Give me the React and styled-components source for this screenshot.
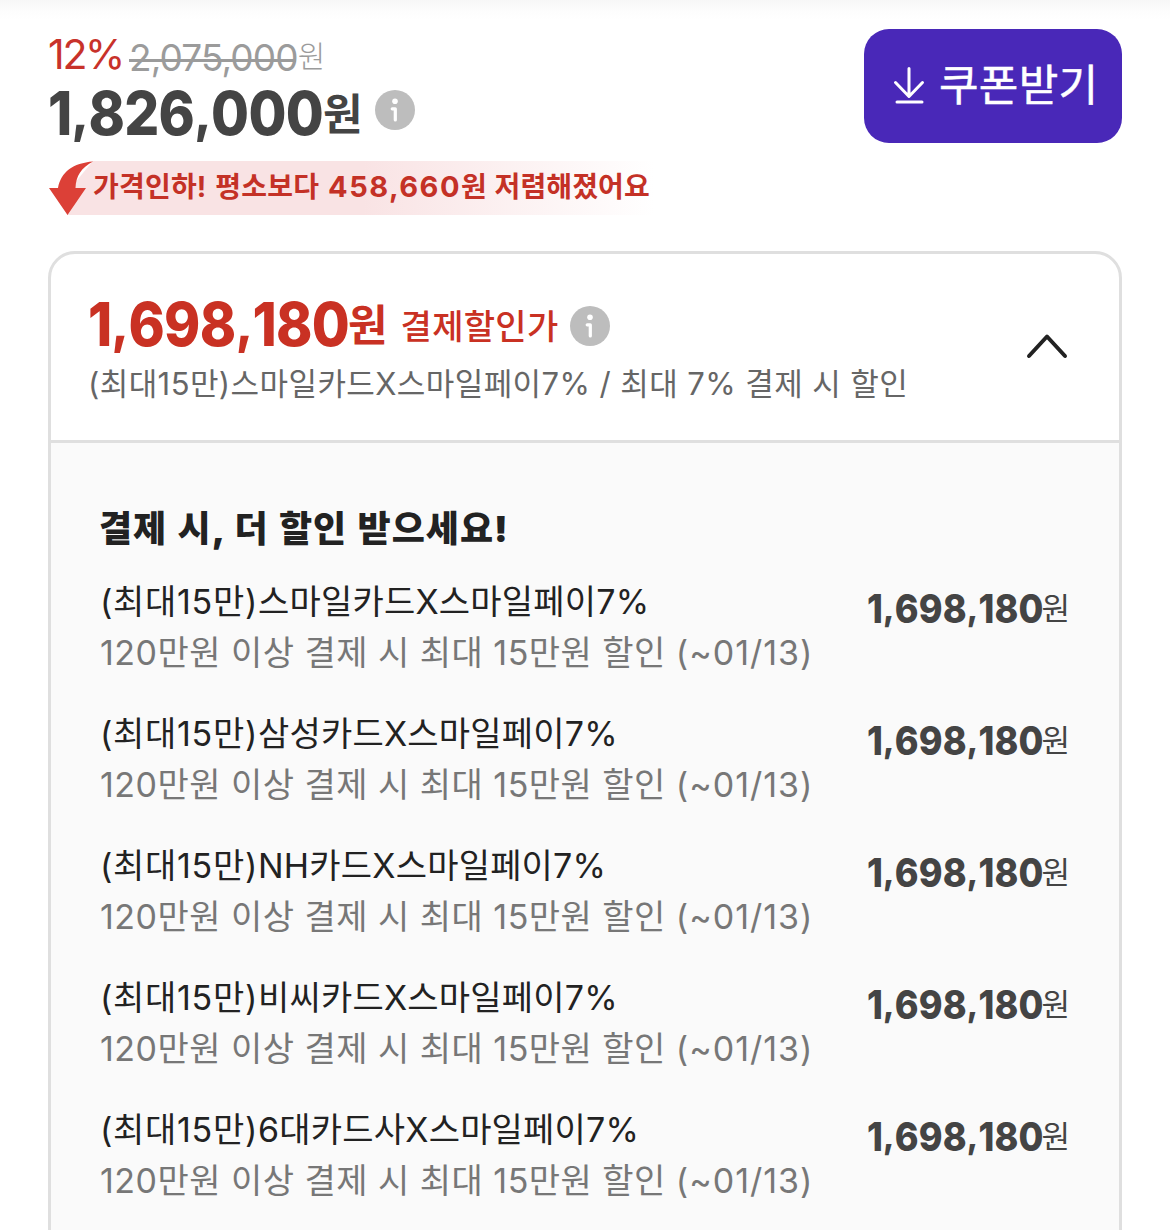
import React from "react";
import styled, { createGlobalStyle } from "styled-components";

const GlobalStyle = createGlobalStyle`
  * { box-sizing: border-box; }
  body {
    margin: 0;
    background: #fff;
    font-family: Inter, "Noto Sans CJK KR", sans-serif;
    overflow: hidden;
  }
`;

const Page = styled.main`
  width: 1170px;
  height: 1230px;
  overflow: hidden;
  padding: 29px 48px 0;
  background: linear-gradient(#f7f7f7, #fdfdfd 12px, #fff 20px) no-repeat;
`;

const Text = styled.span`
  font-size: ${(p) => p.$size}px;
  font-weight: ${(p) => p.$weight || 400};
  letter-spacing: ${(p) => p.$track || 0}px;
  word-spacing: ${(p) => p.$word || 0}px;
  color: ${(p) => p.$color || "inherit"};
  white-space: pre;
`;

const FigureBox = styled.span`
  display: inline-block;
  flex: none;
  width: ${(p) => p.$width}px;
`;

const Figure = styled(Text)`
  display: inline-block;
  transform: scaleX(0.9);
  transform-origin: 0 50%;
`;

const Comma = styled.span`
  font-size: 0.9em;
  line-height: 0;
  vertical-align: 0.08em;
`;

const TopRow = styled.header`
  display: flex;
  justify-content: space-between;
  align-items: flex-start;
  height: 132px;
`;

const PriceColumn = styled.div`
  display: flex;
  flex-direction: column;
`;

const BeforeLine = styled.div`
  display: flex;
  height: 49px;
  line-height: 50px;
`;

const Struck = styled.span`
  display: inline-flex;
  height: 50px;
  margin: 4px 0 0 6px;
  background: linear-gradient(#9b9b9b, #9b9b9b) 0 26px / 167px 3px no-repeat;
`;

const PriceLine = styled.div`
  display: flex;
  align-items: baseline;
  line-height: ${(p) => p.$height}px;
  height: ${(p) => p.$height}px;
`;

const Won = styled(Text)`
  margin: 0 0 ${(p) => p.$lift || 0}px ${(p) => p.$gap || 0}px;
  line-height: 1;
  align-self: flex-end;
`;

const InfoSvg = styled.svg`
  display: block;
  flex: none;
  align-self: flex-start;
  margin: ${(p) => p.$top}px 0 0 ${(p) => p.$left}px;
`;

const CouponButton = styled.button`
  display: flex;
  align-items: center;
  width: 258px;
  height: 114px;
  padding: 0 0 0 29px;
  border: 0;
  border-radius: 25px;
  background: #4928b8;
  color: #fff;
  font-family: inherit;
  line-height: 60px;
`;

const CouponLabel = styled(Text)`
  margin: -2px 0 0 14px;
  -webkit-text-stroke: 0.5px #fff;
`;

const DropBanner = styled.div`
  display: flex;
  align-items: center;
  width: 606px;
  height: 54px;
  padding-left: 1px;
  color: #c43126;
  background: linear-gradient(90deg, #fff 44px, #f9e3e4 44px, #f9e3e4 52%, #fff 100%);
`;

const ArrowSvg = styled.svg`
  display: block;
  flex: none;
`;

const BannerBody = styled.div`
  display: flex;
  align-items: baseline;
  height: 54px;
  line-height: 52px;
`;

const Card = styled.section`
  height: 1010px;
  margin-top: 36px;
  border: 3px solid #dfdfdf;
  border-radius: 27px;
  overflow: hidden;
`;

const CardHead = styled.div`
  display: flex;
  justify-content: space-between;
  height: 189px;
  padding: 32px 51px 0 37px;
  border-bottom: 3px solid #dfdfdf;
`;

const Sub = styled.div`
  line-height: 44px;
`;

const Chevron = styled.svg`
  margin-top: 33px;
  flex: none;
`;

const CardBody = styled.div`
  height: 818px;
  padding: 60px 49px 0 49px;
  background: #fafafa;
`;

const Title = styled.h2`
  margin: 0 0 21px -1px;
  height: 52px;
  line-height: 52px;
  color: #222;
`;

const List = styled.ul`
  display: grid;
  gap: 30px;
  margin: 0;
  padding: 0;
  list-style: none;
`;

const Row = styled.li`
  display: flex;
  justify-content: space-between;
  height: 102px;
  line-height: 51px;
`;

const Detail = styled.div`
  display: flex;
  flex-direction: column;
`;

const DetailLine = styled.div`
  display: flex;
  height: 51px;
`;

const RowPrice = styled.div`
  display: flex;
  align-items: baseline;
  height: 58px;
  padding-top: 7px;
  color: #444;
`;

function Info({ top, left }) {
  return (
    <InfoSvg $top={top} $left={left} width="40" height="40" viewBox="0 0 40 40">
      <circle cx="20" cy="20" r="20" fill="#bdbdbd" />
      <circle cx="20" cy="11.3" r="2.8" fill="#fff" />
      <path d="M17.2 18.800h3.100V30" fill="none" stroke="#fff" strokeWidth="3.2" strokeLinecap="round" strokeLinejoin="round" />
    </InfoSvg>
  );
}

function Amount({ value, $width, ...rest }) {
  return (
    <FigureBox $width={$width}>
      <Figure $weight={800} {...rest}>
        {value.split(",").map((part, i) => (
          <React.Fragment key={i}>
            {i > 0 && <Comma>,</Comma>}
            {part}
          </React.Fragment>
        ))}
      </Figure>
    </FigureBox>
  );
}

const cards = ["스마일카드", "삼성카드", "NH카드", "비씨카드", "6대카드사"];

export default function App() {
  return (
    <Page>
      <GlobalStyle />
      <TopRow>
        <PriceColumn>
          <BeforeLine>
            <Text $size={41} $track={-2.3} $color="#c8322a">12%</Text>
            <Struck>
              <Text $size={37} $track={-0.9} $color="#9b9b9b">2,075,000</Text>
              <Won $size={30} $lift={12} $color="#9b9b9b" $weight={300}>원</Won>
            </Struck>
          </BeforeLine>
          <PriceLine $height={70}>
            <Amount value="1,826,000" $size={61} $width={274} $track={-0.7} $color="#444" />
            <Won $size={43} $weight={700} $lift={12} $gap={1} $color="#444">원</Won>
            <Info top={12} left={12} />
          </PriceLine>
        </PriceColumn>
        <CouponButton>
          <svg width="32" height="38" viewBox="0 0 32 38" fill="none" stroke="#fff" strokeWidth="3" strokeLinecap="round" strokeLinejoin="round">
            <path d="M16 1.500V29M2.500 15.500L16 29.500L29.500 15.500M4 35h25" />
          </svg>
          <CouponLabel $size={43} $track={0.3}>쿠폰받기</CouponLabel>
        </CouponButton>
      </TopRow>
      <DropBanner>
        <ArrowSvg width="44" height="54" viewBox="1 0 44 54">
          <path d="M45 0L20 30L19.500 54H45Z" fill="#f9e3e4" />
          <path d="M1 27H10C13 11 25 2 45 .5C33 7 28 15 27.500 27H38L19.500 54Z" fill="#dc4037" />
        </ArrowSvg>
        <BannerBody>
          <Text $size={28} $weight={700} $track={0.2} $word={2}>가격인하! 평소보다 </Text>
          <Text $size={29} $weight={700} $track={1.5}>458,660</Text>
          <Text $size={28} $weight={700} $track={0.1} $word={1}>원 저렴해졌어요</Text>
        </BannerBody>
      </DropBanner>
      <Card>
        <CardHead>
          <div>
            <PriceLine $height={76}>
              <Amount value="1,698,180" $size={61} $width={259} $track={-0.7} $color="#c93123" />
              <Won $size={43} $weight={700} $lift={15} $gap={1} $color="#c93123">원</Won>
              <Won $size={34} $weight={500} $lift={18} $gap={13} $track={0.3} $color="#c93123">결제할인가</Won>
              <Info top={20} left={12} />
            </PriceLine>
            <Sub>
              <Text $size={31} $track={0.42} $color="#666">(최대15만)스마일카드X스마일페이7% / 최대 7% 결제 시 할인</Text>
            </Sub>
          </div>
          <Chevron width="42" height="62" viewBox="0 0 42 62" fill="none" stroke="#222" strokeWidth="4" strokeLinecap="round" strokeLinejoin="round">
            <path d="M3 37L21 17.500L39 37" />
          </Chevron>
        </CardHead>
        <CardBody>
          <Title><Text $size={36} $weight={900} $track={1} $word={2.2}>결제 시, 더 할인 받으세요!</Text></Title>
          <List>
            {cards.map((name) => (
              <Row key={name}>
                <Detail>
                  <DetailLine>
                    <Text $size={34} $track={0.7} $color="#222">(최대15만)</Text>
                    <Text $size={34} $track={0.2} $color="#222">{name}X스마일페이7%</Text>
                  </DetailLine>
                  <DetailLine>
                    <Text $size={34} $track={0.47} $color="#777">120만원 이상 결제 시 최대 15만원 할인 </Text>
                    <Text $size={34} $track={1} $color="#777">(~01/13)</Text>
                  </DetailLine>
                </Detail>
                <RowPrice>
                  <Amount value="1,698,180" $size={40} $width={174} $track={0.2} />
                  <Won $size={31} $lift={10}>원</Won>
                </RowPrice>
              </Row>
            ))}
          </List>
        </CardBody>
      </Card>
    </Page>
  );
}
